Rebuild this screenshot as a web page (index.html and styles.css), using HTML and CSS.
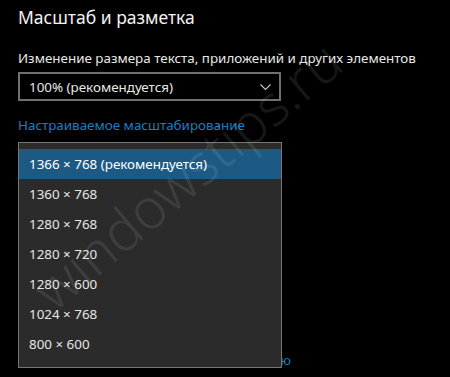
FILE: index.html
```html
<!DOCTYPE html>
<html>
<head>
  <link rel="stylesheet" href="styles.css">
</head>
<body>
  <div class="page">
    <h2 class="title">Масштаб и разметка</h2>

    <div class="field">
      <div class="label">Изменение размера текста, приложений и других элементов</div>
      <div class="select">
        <span>100% (рекомендуется)</span>
        <svg class="chevron" width="11" height="6" viewBox="0 0 11 6">
          <path d="M0.5 0.5 L5.5 5.5 L10.5 0.5" fill="none" stroke="#c8c8c8" stroke-width="1.1"/>
        </svg>
      </div>
    </div>

    <a class="link" href="#">Настраиваемое масштабирование</a>

    <!-- covered by the open list -->
    <div class="field under">
      <div class="label">Разрешение</div>
      <div class="select"><span>1366 × 768 (рекомендуется)</span></div>
      <div class="label">Ориентация</div>
      <div class="select"><span>Альбомная</span></div>
    </div>

    <a class="link last" href="#">Подключиться к беспроводному дисплею</a>

    <ul class="menu">
      <li class="selected">1366 × 768 (рекомендуется)</li>
      <li>1360 × 768</li>
      <li>1280 × 768</li>
      <li>1280 × 720</li>
      <li>1280 × 600</li>
      <li>1024 × 768</li>
      <li>800 × 600</li>
    </ul>

    <div class="watermark">windowstips.ru</div>
  </div>
</body>
</html>
```

FILE: styles.css
```css
body {
  margin: 0;
  background: #000;
  color: #fff;
  font-family: "Noto Sans", "Open Sans", sans-serif;
  overflow: hidden;
}

.page {
  position: relative;
  height: 377px;
  padding: 0 18px;
}

.title {
  margin: 0;
  padding-top: 5px;
  font-size: 17.5px;
  font-weight: 400;
  line-height: 24px;
  color: #f2f2f2;
}

.field {
  margin-top: 21px;
}

.label {
  font-size: 13.4px;
  line-height: 16px;
  color: #e8e8e8;
}

.select {
  display: flex;
  align-items: center;
  justify-content: space-between;
  box-sizing: border-box;
  width: 263px;
  height: 29px;
  margin-top: 6px;
  padding: 0 8px 0 9px;
  border: 2px solid #707070;
  font-size: 13.4px;
  color: #e8e8e8;
}

.chevron {
  display: block;
}

.link {
  display: block;
  margin-top: 16px;
  font-size: 13.4px;
  line-height: 16px;
  color: #1b7ec2;
  text-decoration: none;
}

.under {
  margin-top: 30px;
}

.under .label {
  margin-top: 8px;
}

.link.last {
  margin-top: 79px;
}

.menu {
  position: absolute;
  top: 142px;
  left: 18px;
  box-sizing: border-box;
  width: 264px;
  height: 226px;
  margin: 0;
  padding: 6px 0 0;
  list-style: none;
  background: #2b2b2b;
  border: 1px solid #767676;
}

.menu li {
  height: 30px;
  line-height: 30px;
  padding-left: 10px;
  font-size: 13.4px;
  color: #e6e6e6;
}

.menu li.selected {
  background: #1c5a84;
  color: #fff;
}

.watermark {
  position: absolute;
  left: 58px;
  top: 262px;
  font-size: 56px;
  line-height: 56px;
  font-weight: 300;
  color: rgba(255, 255, 255, 0.09);
  transform: rotate(-40deg);
  transform-origin: left bottom;
  white-space: nowrap;
  pointer-events: none;
}
```
